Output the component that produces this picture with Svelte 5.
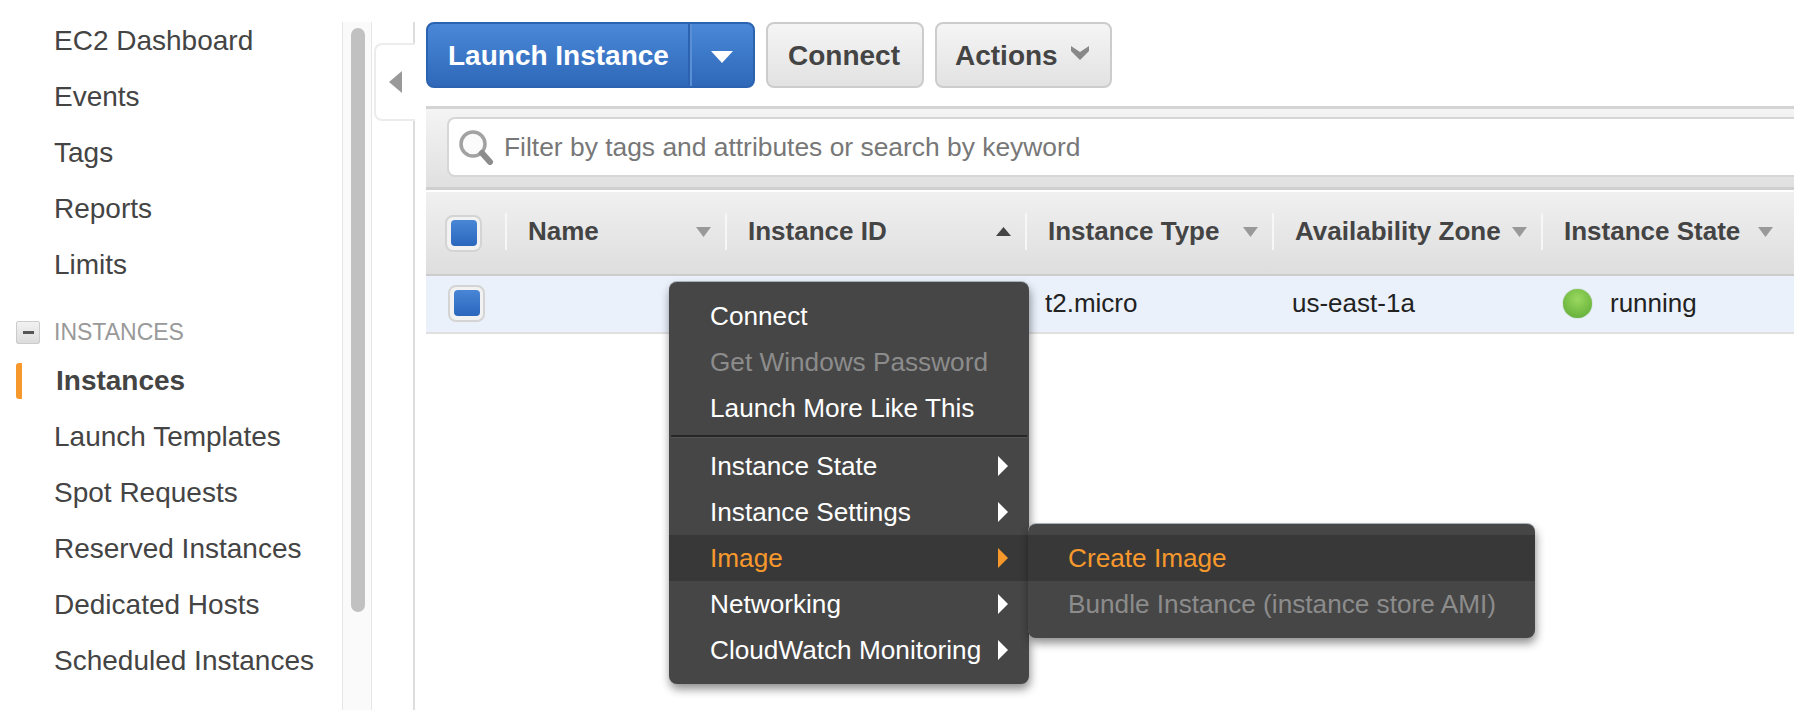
<script>
  const topLinks = ["EC2 Dashboard", "Events", "Tags", "Reports", "Limits"];
  const instanceLinks = ["Instances", "Launch Templates", "Spot Requests", "Reserved Instances", "Dedicated Hosts", "Scheduled Instances"];

  const columns = [
    { label: "Name", arrow: "down" },
    { label: "Instance ID", arrow: "up" },
    { label: "Instance Type", arrow: "down" },
    { label: "Availability Zone", arrow: "down" },
    { label: "Instance State", arrow: "down" },
  ];

  const menuTop = [
    { label: "Connect" },
    { label: "Get Windows Password", disabled: true },
    { label: "Launch More Like This" },
  ];
  const menuBottom = [
    { label: "Instance State" },
    { label: "Instance Settings" },
    { label: "Image", active: true },
    { label: "Networking" },
    { label: "CloudWatch Monitoring" },
  ];
</script>

<div class="page">
  <nav class="sidebar">
    {#each topLinks as link}
      <div class="nav-item">{link}</div>
    {/each}
    <div class="nav-group">
      <span class="collapse"><span></span></span>
      INSTANCES
    </div>
    {#each instanceLinks as link, i}
      <div class="nav-item" class:current={i === 0}>{link}</div>
    {/each}
  </nav>

  <div class="scrollbar"><div class="thumb"></div></div>

  <div class="gutter">
    <div class="toggle">
      <svg width="13" height="22" viewBox="0 0 13 22"><path d="M13 0V22L0 11Z" fill="#999" /></svg>
    </div>
  </div>

  <main class="main">
    <div class="toolbar">
      <div class="btn primary">
        <span class="launch">Launch Instance</span>
        <span class="caret">
          <svg width="22" height="12" viewBox="0 0 22 12"><path d="M0 0H22L11 12Z" fill="#fff" /></svg>
        </span>
      </div>
      <div class="btn connect">Connect</div>
      <div class="btn actions">
        Actions
        <svg width="18" height="14" viewBox="0 0 18 14"><path d="M0 0L9 6L18 0V5L9 14L0 5Z" fill="#888" /></svg>
      </div>
    </div>

    <div class="filter-band">
      <div class="filter">
        <svg width="36" height="36" viewBox="0 0 36 36">
          <circle cx="15" cy="15" r="12" fill="#fbfbfb" stroke="#a2a2a2" stroke-width="3.500" />
          <path d="M24 24L32 33" stroke="#8c8c8c" stroke-width="6" stroke-linecap="round" />
        </svg>
        <span>Filter by tags and attributes or search by keyword</span>
      </div>
    </div>

    <div class="thead grid">
      <div class="check-cell">
        <span class="check"><span></span></span>
      </div>
      {#each columns as col}
        <div class="th">
          <span>{col.label}</span>
          {#if col.arrow === "up"}
            <svg class="sort" width="15" height="9" viewBox="0 0 15 9"><path d="M0 9H15L7.500 0Z" fill="#444" /></svg>
          {:else}
            <svg class="sort" width="15" height="10" viewBox="0 0 15 10"><path d="M0 0H15L7.500 10Z" fill="#999" /></svg>
          {/if}
        </div>
      {/each}
    </div>

    <div class="trow grid">
      <div class="check-cell row-check">
        <span class="check"><span></span></span>
      </div>
      <div class="td"></div>
      <div class="td"></div>
      <div class="td">t2.micro</div>
      <div class="td">us-east-1a</div>
      <div class="td state"><span class="dot"></span>running</div>
    </div>
  </main>

  <div class="menu">
    {#each menuTop as item}
      <div class="menu-item" class:disabled={item.disabled}>{item.label}</div>
    {/each}
    <div class="divider"></div>
    {#each menuBottom as item}
      <div class="menu-item" class:active={item.active}>
        {item.label}
        <svg width="10" height="20" viewBox="0 0 10 20"><path d="M0 0L10 10L0 20Z" fill={item.active ? "#f7982d" : "#fff"} /></svg>
      </div>
    {/each}
  </div>

  <div class="menu submenu">
    <div class="menu-item active">Create Image</div>
    <div class="menu-item disabled">Bundle Instance (instance store AMI)</div>
  </div>
</div>

<style>
  :global(body) {
    margin: 0;
    background: #fff;
  }

  .page {
    position: relative;
    display: flex;
    width: 1794px;
    height: 710px;
    overflow: hidden;
    font-family: "Liberation Sans", Arial, sans-serif;
    color: #444;
  }

  /* Sidebar */
  .sidebar {
    width: 342px;
    flex-shrink: 0;
    padding-top: 13px;
    box-sizing: border-box;
    font-size: 28px;
  }

  .nav-item {
    position: relative;
    height: 56px;
    line-height: 56px;
    padding-left: 54px;
    white-space: nowrap;
  }

  .nav-item.current {
    padding-left: 56px;
    font-weight: bold;
  }

  .nav-item.current::before {
    content: "";
    position: absolute;
    left: 16px;
    top: 10px;
    width: 6px;
    height: 36px;
    background: #f7982d;
    border-radius: 3px 0 0 3px;
  }

  .nav-group {
    display: flex;
    align-items: center;
    gap: 14px;
    height: 42px;
    margin-top: 18px;
    padding-left: 16px;
    font-size: 23px;
    color: #999;
  }

  .collapse {
    display: flex;
    align-items: center;
    justify-content: center;
    width: 24px;
    height: 23px;
    box-sizing: border-box;
    background: linear-gradient(#f2f2f2, #dcdcdc);
    border: 1px solid #ccc;
    border-radius: 2px;
  }

  .collapse span {
    width: 11px;
    height: 3px;
    background: #555;
  }

  .scrollbar {
    width: 30px;
    flex-shrink: 0;
    margin-top: 22px;
    padding: 6px 6px 0 8px;
    box-sizing: border-box;
    background: #fafafa;
    border-left: 1px solid #e6e6e6;
    border-right: 1px solid #e6e6e6;
  }

  .thumb {
    height: 584px;
    background: #c1c1c1;
    border-radius: 8px;
  }

  .gutter {
    width: 43px;
    flex-shrink: 0;
    margin-top: 22px;
    box-sizing: border-box;
    border-right: 2px solid #ddd;
    position: relative;
  }

  .toggle {
    position: absolute;
    left: 2px;
    right: -2px;
    top: 21px;
    height: 78px;
    display: flex;
    align-items: center;
    padding-left: 13px;
    box-sizing: border-box;
    background: #fff;
    border: 2px solid #ececec;
    border-right: none;
    border-radius: 8px 0 0 8px;
  }

  /* Main */
  .main {
    flex: 1;
    min-width: 0;
    padding: 22px 0 0 11px;
  }

  .toolbar {
    display: flex;
    gap: 11px;
    height: 66px;
    margin-bottom: 18px;
  }

  .btn {
    display: flex;
    align-items: center;
    box-sizing: border-box;
    padding-top: 2px;
    font-size: 28px;
    font-weight: bold;
    background: linear-gradient(#f5f5f5, #e2e2e2);
    border: 2px solid #ccc;
    border-radius: 8px;
  }

  .primary {
    width: 329px;
    padding-top: 0;
    color: #fff;
    background: linear-gradient(#4a88d8, #2f68b8);
    border-color: #2c63b0;
  }

  .launch {
    width: 262px;
    height: 100%;
    line-height: 64px;
    padding-left: 20px;
    box-sizing: border-box;
    border-right: 2px solid #2c63b0;
    box-shadow: 2px 0 0 #5a8fd6;
  }

  .caret {
    flex: 1;
    display: flex;
    justify-content: center;
    padding-top: 4px;
  }

  .connect {
    width: 158px;
    padding-left: 20px;
  }

  .actions {
    width: 177px;
    padding-left: 18px;
    gap: 13px;
  }

  .actions svg {
    margin-bottom: 6px;
  }

  .filter-band {
    height: 84px;
    padding: 8px 0 0 21px;
    box-sizing: border-box;
    background: linear-gradient(#f4f4f4, #e0e0e0);
    border-top: 3px solid #d4d4d4;
    border-bottom: 3px solid #cfcfcf;
    margin-bottom: 2px;
  }

  .filter {
    display: flex;
    align-items: center;
    gap: 10px;
    height: 60px;
    padding-left: 9px;
    box-sizing: border-box;
    background: #fff;
    border: 2px solid #d6d6d6;
    border-right: none;
    border-radius: 8px 0 0 8px;
    font-size: 26.400px;
    color: #777;
    white-space: nowrap;
  }

  .grid {
    display: grid;
    grid-template-columns: 79px 220px 300px 247px 269px 246px 7px;
  }

  .thead {
    height: 84px;
    box-sizing: border-box;
    background: linear-gradient(#f0f0f0, #dedede);
    border-bottom: 2px solid #ccc;
    position: relative;
  }

  .check-cell {
    display: flex;
    align-items: center;
    padding: 0 0 0 19px;
    height: 82px;
    position: relative;
    top: -9px;
    margin-top: 9px;
  }

  .check-cell.row-check {
    height: 56px;
    padding-left: 22px;
    top: -1px;
    margin-top: 0;
  }

  .check {
    display: flex;
    align-items: center;
    justify-content: center;
    width: 37px;
    height: 37px;
    box-sizing: border-box;
    background: #f2f2f2;
    border: 2px solid #d4d4d4;
    border-radius: 8px;
  }

  .check span {
    width: 26px;
    height: 26px;
    background: linear-gradient(#4a86d6, #2a66bc);
    border-radius: 4px;
  }

  .th {
    display: flex;
    align-items: center;
    justify-content: space-between;
    height: 37px;
    margin-top: 21px;
    padding: 0 14px 0 21px;
    border-left: 2px solid #f7f7f7;
    font-size: 26px;
    font-weight: bold;
    white-space: nowrap;
  }

  .sort {
    flex-shrink: 0;
  }

  .trow {
    height: 58px;
    box-sizing: border-box;
    background: #eaf1fb;
    border-bottom: 2px solid #e0e0e0;
  }

  .td {
    display: flex;
    align-items: center;
    height: 54px;
    padding-left: 20px;
    font-size: 26px;
    color: #222;
    white-space: nowrap;
  }

  .state {
    gap: 18px;
    padding-left: 22px;
  }

  .dot {
    width: 29px;
    height: 29px;
    border-radius: 50%;
    background: radial-gradient(circle at 50% 35%, #9ad85f, #5aa832);
    box-shadow: 0 0 1px #4c8f2a;
  }

  /* Context menus */
  .menu {
    position: absolute;
    left: 669px;
    top: 282px;
    width: 360px;
    padding: 11px 0 11px;
    box-sizing: border-box;
    background: #464646;
    border-radius: 8px;
    box-shadow: 0 -1px 0 #aab0b8, 1px 5px 10px rgba(0, 0, 0, 0.45);
    font-size: 26.200px;
    color: #fff;
  }

  .menu-item {
    display: flex;
    align-items: center;
    justify-content: space-between;
    height: 46px;
    padding: 0 21px 0 41px;
    white-space: nowrap;
  }

  .menu-item.disabled {
    color: #8c8c8c;
  }

  .menu-item.active {
    background: #383838;
    color: #f7982d;
  }

  .divider {
    height: 2px;
    margin: 4px 2px 6px;
    background: #262626;
    box-shadow: 0 1px 0 #555;
  }

  .submenu {
    left: 1028px;
    top: 524px;
    width: 507px;
    height: 114px;
    padding: 11px 0;
  }

  .submenu .menu-item {
    padding-left: 40px;
  }
</style>
